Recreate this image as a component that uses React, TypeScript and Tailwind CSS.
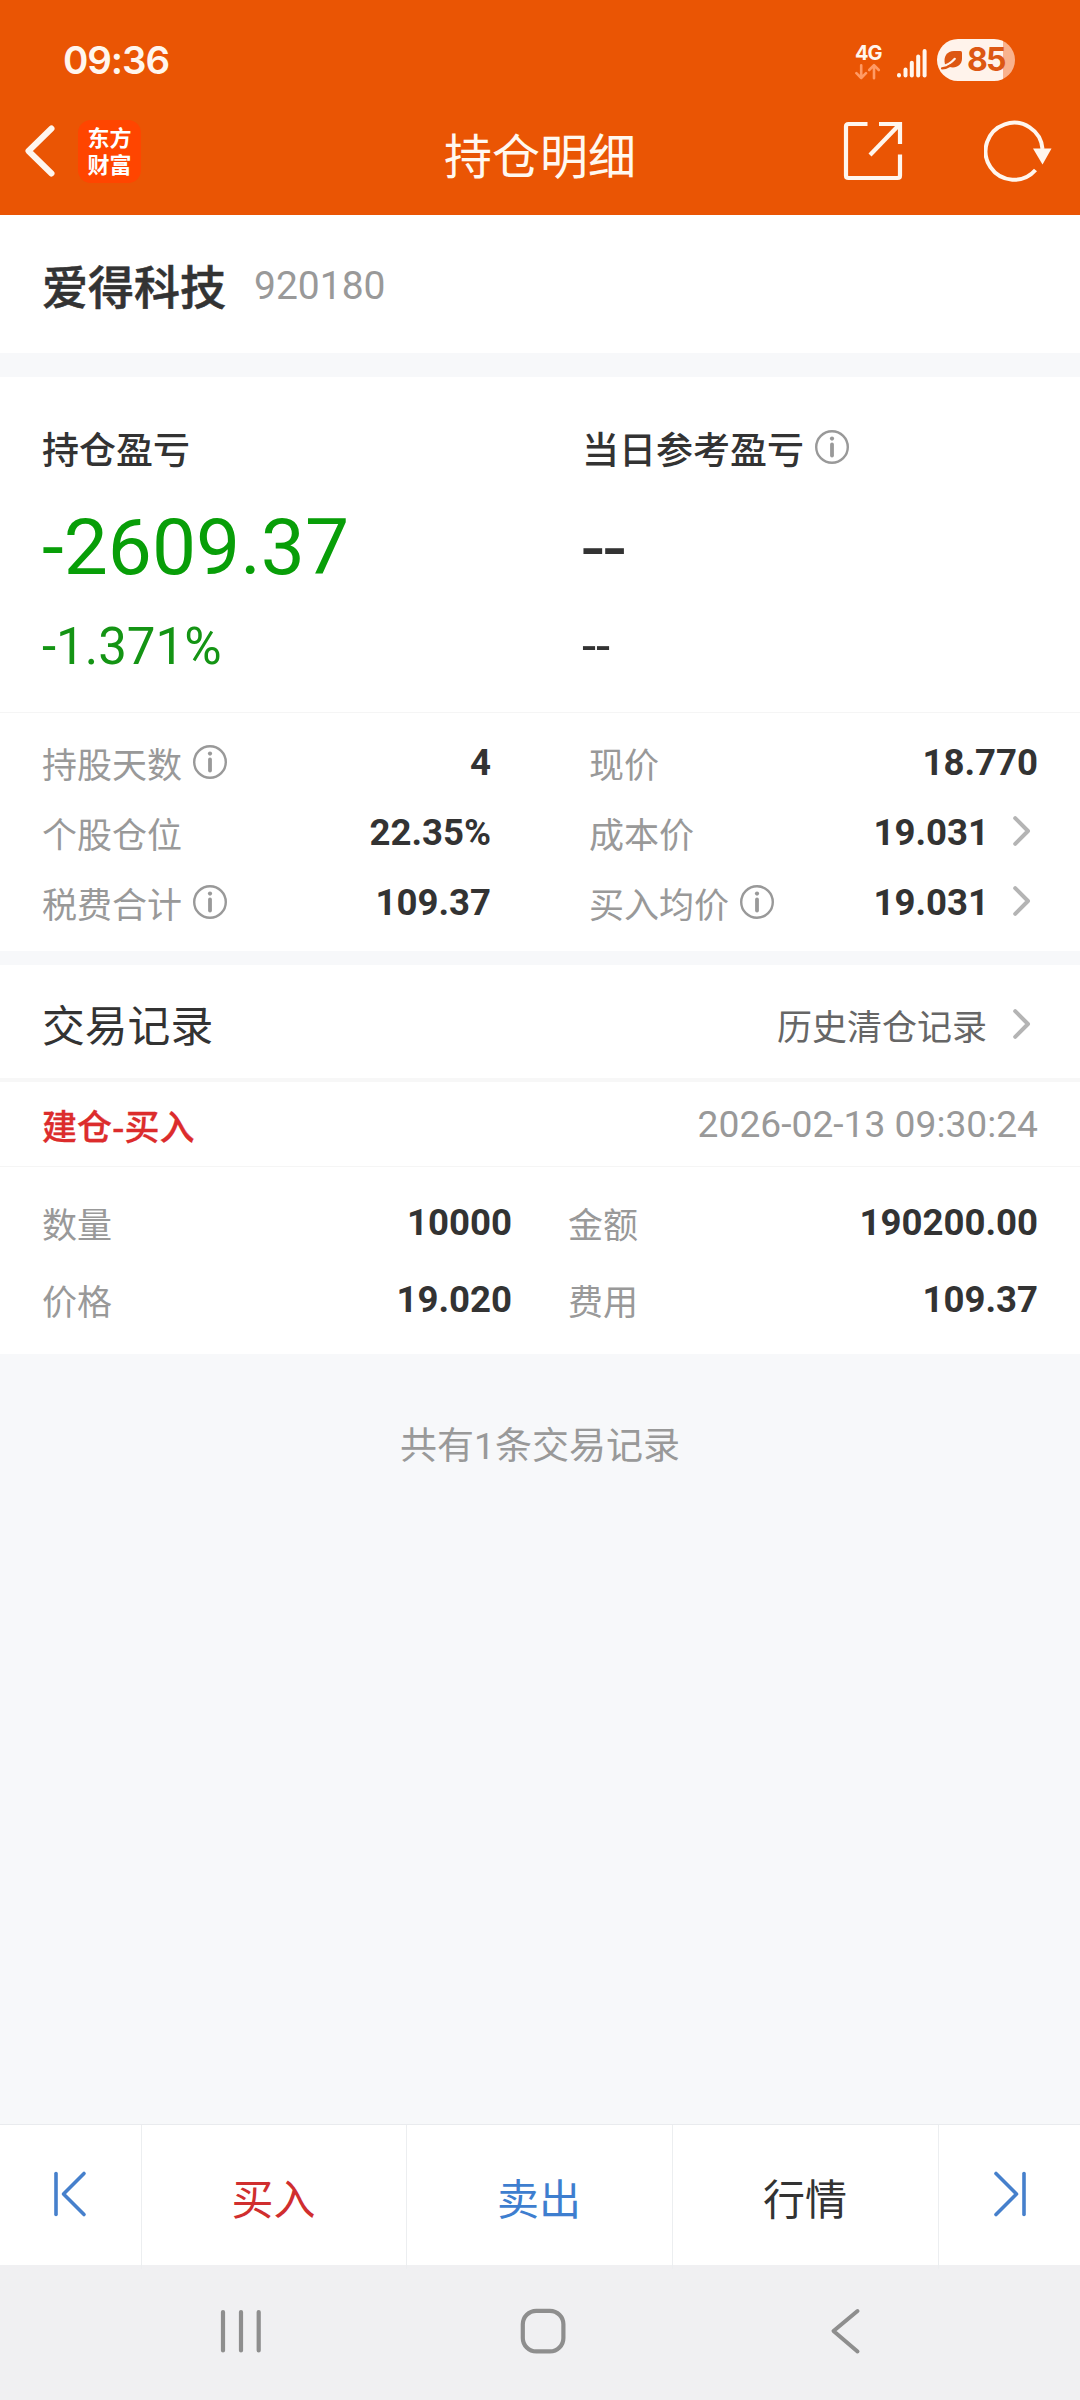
import React from "react";

const CJK = "font-['Noto_Sans_CJK_SC',sans-serif]";

function InfoIcon() {
  return (
    <svg width="34" height="34" viewBox="0 0 34 34" fill="none" className="shrink-0">
      <circle cx="17" cy="17" r="15.8" stroke="#999999" strokeWidth="2.4" />
      <circle cx="17" cy="8.6" r="2.1" fill="#999999" />
      <path d="M17 14.5V25.5" stroke="#999999" strokeWidth="3.8" strokeLinecap="round" />
    </svg>
  );
}

function ChevronRight() {
  return (
    <svg width="18" height="30" viewBox="0 0 18 30" fill="none" className="shrink-0">
      <path d="M2.2 2.2L15 15L2.2 27.8" stroke="#b4b4b4" strokeWidth="4" strokeLinecap="round" strokeLinejoin="round" />
    </svg>
  );
}

function Label({ text, info }: { text: string; info?: boolean }) {
  return (
    <div className="flex items-center gap-[11px] text-[35px] leading-[40px] text-[#999999]">
      <span>{text}</span>
      {info && (
        <div className="pb-[2px]">
          <InfoIcon />
        </div>
      )}
    </div>
  );
}

function Value({ children }: { children: React.ReactNode }) {
  return <span className="font-[Roboto] text-[36.6px] leading-[40px] font-bold text-[#333333]">{children}</span>;
}

function StatRow({ label, value, info, more }: { label: string; value: string; info?: boolean; more?: boolean }) {
  return (
    <div className="flex h-[70px] items-center justify-between">
      <Label text={label} info={info} />
      <div className="flex items-center gap-[24px]">
        <Value>{value}</Value>
        {more && (
          <div className="pr-[7px] pb-[5px]">
            <ChevronRight />
          </div>
        )}
      </div>
    </div>
  );
}

function StatusBar() {
  return (
    <div className="flex h-[99px] items-start justify-between pr-[65px] pl-[63px] text-[#fff6ee]">
      <span className="mt-[40px] font-[Inter] text-[38.5px] leading-[40px] font-semibold tracking-[-1.1px]">09:36</span>
      <div className="mt-[39px] flex items-start">
        <div className="mt-[5px] mr-[16px] w-[26px]">
          <div className="font-[Inter] text-[20px] leading-[18px] font-bold tracking-[-1px]">4G</div>
          <svg width="26" height="17" viewBox="0 0 26 17" fill="none" className="mt-[1px]" stroke="#ff9a64" strokeWidth="2.6" strokeLinecap="round" strokeLinejoin="round">
            <path d="M6.2 2.2V15M1.4 10.2L6.2 15L11 10.2" />
            <path d="M19 15.2V2.2M14.2 7L19 2.2L23.8 7" />
          </svg>
        </div>
        <svg width="30" height="30" viewBox="0 0 30 30" className="mt-[9px] mr-[10px]" fill="#fff6ee">
          <rect x="0" y="25" width="4" height="4.6" rx="2" />
          <rect x="6.5" y="19.4" width="4" height="10.2" rx="2" />
          <rect x="12.8" y="12.8" width="4" height="16.8" rx="2" />
          <rect x="19.2" y="6.6" width="4" height="23" rx="2" />
          <rect x="25.6" y="1" width="4" height="28.6" rx="2" />
        </svg>
        <div className="flex h-[42px] w-[78px] items-center rounded-full bg-[linear-gradient(to_right,#fff3eb_66px,#f9b28d_66px)] pl-[4px]">
          <svg width="22" height="20" viewBox="0 0 22 20" className="mr-[4px] shrink-0">
            <path d="M4 14.5C2 6.500 6 1 13 1H19.500Q21 1 21 2.500V8.500C21 15.500 14.500 19 8 16.800Z" fill="#dd5712" />
            <path d="M2 16.300C7 15 10.500 12.500 13.800 8.800" stroke="#fff3eb" strokeWidth="2.200" strokeLinecap="round" fill="none" />
            <path d="M1 18.300C4.500 18 7 17.200 9.500 15.500" stroke="#dd5712" strokeWidth="2.200" strokeLinecap="round" fill="none" />
          </svg>
          <span className="font-[Inter] text-[32px] leading-[42px] font-bold tracking-[-1.8px] text-[#dd5712]">85</span>
        </div>
      </div>
    </div>
  );
}

function TitleBar() {
  return (
    <div className="grid h-[104px] grid-cols-3 items-center">
      <div className="flex items-center pl-[23px]">
        <svg width="34" height="54" viewBox="0 0 34 54" fill="none">
          <path d="M28.500 4.500L5.500 27L28.500 49.500" stroke="#fff6ee" strokeWidth="6" strokeLinecap="round" strokeLinejoin="round" />
        </svg>
        <div className="ml-[21px] h-[63px] w-[63px] rounded-[13px] bg-[#ff4500] pt-[3px] text-center text-[22px] leading-[27px] font-bold text-white">
          东方
          <br />
          财富
        </div>
      </div>
      <h1 className="pt-[3px] text-center text-[48px] leading-[60px] font-normal text-[#fff8f0]">持仓明细</h1>
      <div className="flex items-center justify-end pr-[26px]">
        <svg width="60" height="60" viewBox="0 0 60 60" fill="none" stroke="#fff6ee" strokeWidth="4.200">
          <path d="M24.500 3H5.500Q3 3 3 5.500V54.500Q3 57 5.500 57H54.500Q57 57 57 54.500V33.500" />
          <path d="M36 3H57V23" />
          <path d="M56 4L27 34" />
        </svg>
        <svg width="70" height="62" viewBox="0 0 70 62" className="ml-[81px]" fill="none">
          <path d="M58.500 29A28.500 28.500 0 1 0 51.500 50" stroke="#fff6ee" strokeWidth="4" />
          <path d="M49 28.500H67.500L58.500 44.500Z" fill="#fff6ee" />
        </svg>
      </div>
    </div>
  );
}

function TradeCell({ label, value }: { label: string; value: string }) {
  return (
    <div className="flex h-[77px] items-center justify-between">
      <Label text={label} />
      <Value>{value}</Value>
    </div>
  );
}

function JumpIcon({ flip }: { flip?: boolean }) {
  return (
    <svg width="34" height="48" viewBox="0 0 34 48" fill="none" stroke="#4680cc" strokeWidth="3.600" strokeLinecap="round" strokeLinejoin="round" className={flip ? "-scale-x-100" : ""}>
      <path d="M3 3.500V44.500" />
      <path d="M31 3.500L10.500 24L31 44.500" />
    </svg>
  );
}

export default function App() {
  return (
    <div className={`${CJK} flex h-[2400px] w-[1080px] flex-col overflow-hidden bg-[#f7f8fa] text-[#333333]`}>
      <header className="h-[215px] bg-[#ea5504]">
        <StatusBar />
        <TitleBar />
      </header>

      <section className="flex h-[138px] items-center bg-white pl-[42px]">
        <span className="text-[46px] leading-[60px] font-medium [-webkit-text-stroke:0.6px_#333333]">爱得科技</span>
        <span className="ml-[28px] pt-[4px] font-[Roboto] text-[39px] leading-[60px] text-[#999999]">920180</span>
      </section>

      <section className="mt-[24px] h-[335px] bg-white">
        <div className="grid grid-cols-2 px-[42px] pt-[50px]">
          <div>
            <div className="text-[37px] leading-[42px] font-medium">持仓盈亏</div>
            <div className="mt-[25px] font-[Roboto] text-[78.5px] leading-[106px] text-[#089e08]">-2609.37</div>
            <div className="mt-[17px] font-[Roboto] text-[51px] leading-[60px] text-[#149414]">-1.371%</div>
          </div>
          <div className="pl-[42px]">
            <div className="flex items-center gap-[11px] text-[37px] leading-[42px] font-medium">
              <span>当日参考盈亏</span>
              <div className="pb-[2px]">
                <InfoIcon />
              </div>
            </div>
            <div className="mt-[26px] font-[Roboto] text-[78.5px] leading-[106px]">--</div>
            <div className="mt-[16px] font-[Roboto] text-[51px] leading-[60px]">--</div>
          </div>
        </div>
      </section>

      <section className="grid h-[239px] grid-cols-[449px_449px] justify-between border-t border-[#f5f5f5] bg-white px-[42px] pt-[15px]">
        <div>
          <StatRow label="持股天数" value="4" info />
          <StatRow label="个股仓位" value="22.35%" />
          <StatRow label="税费合计" value="109.37" info />
        </div>
        <div>
          <StatRow label="现价" value="18.770" />
          <StatRow label="成本价" value="19.031" more />
          <StatRow label="买入均价" value="19.031" info more />
        </div>
      </section>

      <section className="mt-[14px] flex h-[117px] items-center justify-between border-b-4 border-[#f7f7f7] bg-white pr-[49px] pl-[42px]">
        <h2 className="pt-[2px] text-[42.8px] leading-[60px] font-normal">交易记录</h2>
        <div className="flex items-center gap-[26px] pt-[6px] text-[35px] leading-[40px] text-[#666666]">
          <span>历史清仓记录</span>
          <div className="pb-[2px]">
            <ChevronRight />
          </div>
        </div>
      </section>

      <section className="flex h-[85px] items-center justify-between border-b border-[#f5f5f5] bg-white px-[42px]">
        <span className="pt-[2px] text-[35px] leading-[40px] font-medium text-[#dc2c2c] [-webkit-text-stroke:0.3px_#dc2c2c]">建仓-买入</span>
        <span className="font-[Roboto] text-[37.2px] leading-[40px] text-[#999999]">2026-02-13 09:30:24</span>
      </section>

      <section className="grid h-[187px] grid-cols-[470px_470px] justify-between bg-white px-[42px] pt-[17px]">
        <div>
          <TradeCell label="数量" value="10000" />
          <TradeCell label="价格" value="19.020" />
        </div>
        <div>
          <TradeCell label="金额" value="190200.00" />
          <TradeCell label="费用" value="109.37" />
        </div>
      </section>

      <p className="pt-[64px] text-center text-[37px] leading-[50px] text-[#999999]">
        共有<span className="font-[Roboto]">1</span>条交易记录
      </p>

      <footer className="mt-auto">
        <div className="grid h-[141px] grid-cols-[142px_265px_266px_266px_141px] border-t border-[#e9ebee] bg-white text-center text-[42px] leading-[144px]">
          <button className="flex items-center justify-center border-r border-[#eceef0] pr-[1px] pb-[7px]">
            <JumpIcon />
          </button>
          <button className="border-r border-[#eceef0] pr-[1px] text-[#d02e2e]">买入</button>
          <button className="border-r border-[#eceef0] pr-[1px] text-[#3e7ecf]">卖出</button>
          <button className="border-r border-[#eceef0] pr-[1px]">行情</button>
          <button className="flex items-center justify-center pb-[7px]">
            <JumpIcon flip />
          </button>
        </div>
        <nav className="flex h-[135px] items-center bg-[#f0f0f2] pb-[3px]">
          <svg width="48" height="48" viewBox="0 0 48 48" className="ml-[217px]" fill="none" stroke="#8e8e8e" strokeWidth="4.200" strokeLinecap="round">
            <path d="M6 5V43.500M24 5V43.500M41.700 5V43.500" />
          </svg>
          <svg width="48" height="48" viewBox="0 0 48 48" className="ml-[254px]" fill="none" stroke="#8e8e8e" strokeWidth="4.200">
            <rect x="3.800" y="3.800" width="40.600" height="40.600" rx="13.500" />
          </svg>
          <svg width="48" height="48" viewBox="0 0 48 48" className="ml-[255px]" fill="none" stroke="#8e8e8e" strokeWidth="4" strokeLinecap="round" strokeLinejoin="round">
            <path d="M35.500 4L11.500 24L35.500 44.500" />
          </svg>
        </nav>
      </footer>
    </div>
  );
}
